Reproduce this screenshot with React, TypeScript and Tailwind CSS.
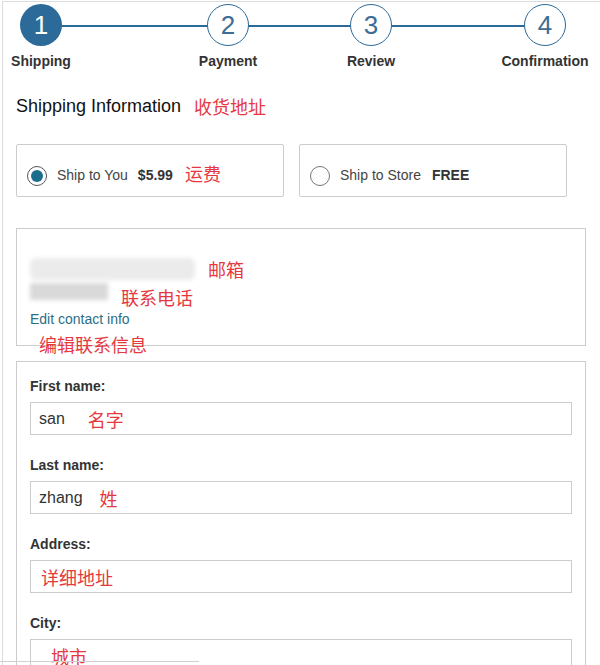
/**
 * Checkout — shipping step with annotated fields.
 */

const STEPS = [
  { n: 1, label: 'Shipping', w: 'w-[76px]', ml: 'ml-0', active: true },
  { n: 2, label: 'Payment', w: 'w-[90px]', ml: 'ml-[104px]', active: false },
  { n: 3, label: 'Review', w: 'w-[90px]', ml: 'ml-[53px]', active: false },
  { n: 4, label: 'Confirmation', w: 'w-[100px]', ml: 'ml-[79px]', active: false },
]

const RED = 'font-["Noto_Sans_CJK_SC",sans-serif] text-[18px] leading-[24px] text-[#e5393f]'

function Stepper() {
  return (
    <div className="relative flex pt-[2px]">
      <div className="absolute left-[38px] top-[23px] h-[2px] w-[504px] bg-[#2b6a99]" />
      {STEPS.map((s) => (
        <div key={s.n} className={`relative flex flex-col items-center ${s.w} ${s.ml}`}>
          <div
            className={
              s.active
                ? 'flex h-[42px] w-[42px] items-center justify-center rounded-full bg-[#2b6a99] text-[26px] text-white'
                : 'flex h-[42px] w-[42px] items-center justify-center rounded-full border border-[#2b6a99] bg-white text-[26px] text-[#3d6c94]'
            }
          >
            {s.n}
          </div>
          <div className="mt-[7px] whitespace-nowrap text-[14px] font-bold leading-[16px] text-[#333]">
            {s.label}
          </div>
        </div>
      ))}
    </div>
  )
}

function Field({ label, children, first }: { label: string; children: React.ReactNode; first?: boolean }) {
  return (
    <div className={first ? '' : 'mt-[22px]'}>
      <div className="text-[14px] font-bold leading-[16px] text-[#333]">{label}</div>
      <div className="mt-[8px] flex h-[33px] items-center border border-[#ccc] pl-[8px] text-[16px] text-[#333]">
        {children}
      </div>
    </div>
  )
}

export default function App() {
  return (
    <div className="relative h-[665px] w-[600px] overflow-hidden bg-white font-['Liberation_Sans',Arial,sans-serif]">
      <div className="ml-[2px] mt-[1px] h-[700px] border-l border-t border-[#dcdcdc]">
        <Stepper />

        <div className="pl-[13px]">
          {/* Heading */}
          <div className="mt-[25px] flex items-center">
            <h1 className="text-[18px] leading-[24px] text-[#111]">Shipping Information</h1>
            <span className={`ml-[13px] ${RED}`}>收货地址</span>
          </div>

          {/* Shipping method */}
          <div className="mt-[26px] flex gap-[15px]">
            <div className="flex h-[53px] w-[268px] items-center rounded-[2px] border border-[#ccc] pl-[10px] pt-[10px]">
              <span className="flex h-[20px] w-[20px] items-center justify-center rounded-full border border-[#555] bg-white">
                <span className="h-[12px] w-[12px] rounded-full bg-[#1b6d8c]" />
              </span>
              <span className="ml-[10px] text-[14px] text-[#444]">Ship to You</span>
              <span className="ml-[10px] text-[14px] font-bold text-[#333]">$5.99</span>
              <span className={`ml-[12px] -mt-[6px] ${RED}`}>运费</span>
            </div>
            <div className="flex h-[53px] w-[268px] items-center rounded-[2px] border border-[#ccc] pl-[10px] pt-[10px]">
              <span className="h-[20px] w-[20px] rounded-full border border-[#777] bg-white" />
              <span className="ml-[10px] text-[14px] text-[#444]">Ship to Store</span>
              <span className="ml-[11px] text-[14px] font-bold text-[#333]">FREE</span>
            </div>
          </div>

          {/* Contact info */}
          <div className="mt-[31px] w-[570px] border border-[#ccc] pl-[13px] pt-[29px]">
            <div className="flex h-[22px] items-center">
              <div className="h-[22px] w-[165px] rounded-[6px] bg-[#ebebeb] blur-[2px]" />
              <span className={`ml-[13px] ${RED}`}>邮箱</span>
            </div>
            <div className="flex h-[31px] items-start">
              <div className="mt-[3px] h-[17px] w-[78px] bg-[#d9d9d9] blur-[2px]" />
              <span className={`ml-[13px] mt-[5px] ${RED}`}>联系电话</span>
            </div>
            <div className="text-[14px] leading-[16px] text-[#2b6e85]">Edit contact info</div>
            <div className={`mb-[-11px] ml-[9px] mt-[5px] ${RED}`}>编辑联系信息</div>
          </div>

          {/* Address form */}
          <div className="mt-[15px] w-[570px] border border-[#ccc] px-[13px] pt-[16px]">
            <Field label="First name:" first>
              <span>san</span>
              <span className={`ml-[23px] ${RED}`}>名字</span>
            </Field>
            <Field label="Last name:">
              <span>zhang</span>
              <span className={`ml-[17px] ${RED}`}>姓</span>
            </Field>
            <Field label="Address:">
              <span className={`ml-[2px] ${RED}`}>详细地址</span>
            </Field>
            <Field label="City:">
              <span className={`ml-[12px] ${RED}`}>城市</span>
            </Field>
          </div>
        </div>
      </div>
      <div className="absolute left-0 top-[661px] h-[1px] w-[199px] bg-[#d0d0d0]" />
    </div>
  )
}
